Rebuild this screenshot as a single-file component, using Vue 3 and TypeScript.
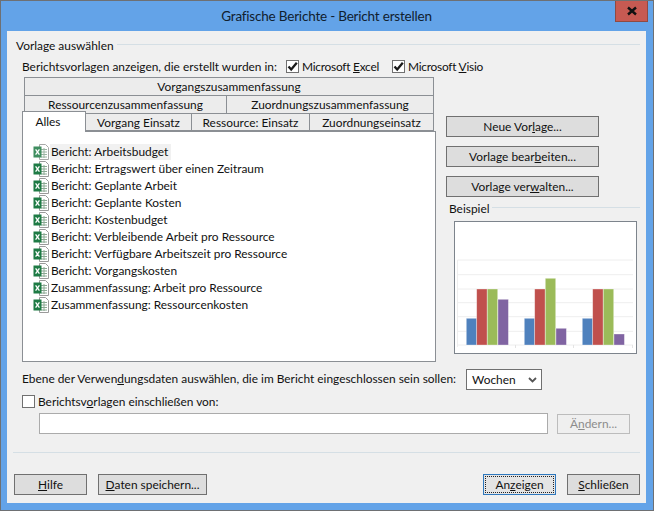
<script setup lang="ts">
const reports = [
  'Bericht: Arbeitsbudget',
  'Bericht: Ertragswert über einen Zeitraum',
  'Bericht: Geplante Arbeit',
  'Bericht: Geplante Kosten',
  'Bericht: Kostenbudget',
  'Bericht: Verbleibende Arbeit pro Ressource',
  'Bericht: Verfügbare Arbeitszeit pro Ressource',
  'Bericht: Vorgangskosten',
  'Zusammenfassung: Arbeit pro Ressource',
  'Zusammenfassung: Ressourcenkosten',
]

const grid = [38, 52.7, 67, 80.7, 94.7, 109.3, 123]

// bars in chart coordinates: x, top
const bars = [
  { x: 11.3, y: 96.3, c: '#4f81bd' },
  { x: 21.7, y: 67, c: '#c0504d' },
  { x: 32.3, y: 67, c: '#9bbb59' },
  { x: 43, y: 77.3, c: '#8064a2' },
  { x: 69.3, y: 96.3, c: '#4f81bd' },
  { x: 79.7, y: 67, c: '#c0504d' },
  { x: 90.3, y: 56.3, c: '#9bbb59' },
  { x: 101, y: 106.3, c: '#8064a2' },
  { x: 127.3, y: 96.3, c: '#4f81bd' },
  { x: 137.7, y: 67, c: '#c0504d' },
  { x: 148.3, y: 67, c: '#9bbb59' },
  { x: 159, y: 112, c: '#8064a2' },
]
</script>

<template>
  <div class="window">
    <div class="titlebar">
      <span class="title">Grafische Berichte - Bericht erstellen</span>
      <div class="close">
        <svg width="12" height="10" viewBox="0 0 12 10">
          <path d="M2 1.5 L10 8.5 M10 1.5 L2 8.5" stroke="#111" stroke-width="2.4" fill="none" />
        </svg>
      </div>
    </div>

    <div class="content">
      <div class="legend"><span>Vorlage auswählen</span><i></i></div>

      <div class="filter">
        <span class="filter-label">Berichtsvorlagen anzeigen, die erstellt wurden in:</span>
        <span class="check checked">
          <svg width="11" height="11" viewBox="0 0 11 11"><path d="M1.5 5.5 L4.2 8.5 L9.8 1.8" stroke="#1a1a1a" stroke-width="2.3" fill="none" /></svg>
        </span>
        <span class="check-label">Microsoft <u>E</u>xcel</span>
        <span class="check checked second">
          <svg width="11" height="11" viewBox="0 0 11 11"><path d="M1.5 5.5 L4.2 8.5 L9.8 1.8" stroke="#1a1a1a" stroke-width="2.3" fill="none" /></svg>
        </span>
        <span class="check-label">Microsoft <u>V</u>isio</span>
      </div>

      <div class="main">
        <div class="left">
          <div class="tabs">
            <div class="tab-row">
              <div class="tab grow">Vorgangszusammenfassung</div>
            </div>
            <div class="tab-row">
              <div class="tab w203">Ressourcenzusammenfassung</div>
              <div class="tab grow">Zuordnungszusammenfassung</div>
            </div>
            <div class="tab-row last">
              <div class="tab active">Alles</div>
              <div class="tab w106">Vorgang Einsatz</div>
              <div class="tab w118">Ressource: Einsatz</div>
              <div class="tab grow">Zuordnungseinsatz</div>
            </div>
          </div>
          <div class="panel">
            <div v-for="(r, i) in reports" :key="r" class="report" :class="{ selected: i === 0 }">
              <svg class="xl" width="16" height="16" viewBox="0 0 16 16">
                <path d="M6.5 0.5 H12.5 L15.5 3.5 V15.5 H6.5 Z" fill="#fff" stroke="#9a9a9a" />
                <path d="M8 5.5 H14 M8 8 H14 M8 10.5 H14 M8 13 H14 M11 4 V14" stroke="#8aa892" stroke-width="1" fill="none" />
                <rect x="0.5" y="2.5" width="8" height="11" fill="#1e7b45" />
                <path d="M2.6 5.3 L6.4 10.7 M6.4 5.3 L2.6 10.7" stroke="#fff" stroke-width="1.3" fill="none" />
              </svg>
              <span class="report-text">{{ r }}</span>
            </div>
          </div>
        </div>

        <div class="right">
          <div class="btn side">Neue Vor<u>l</u>age...</div>
          <div class="btn side">Vorlage bear<u>b</u>eiten...</div>
          <div class="btn side">Vorlage ver<u>w</u>alten...</div>
          <div class="legend sample"><span>Beispiel</span><i></i></div>
          <div class="chart">
            <svg width="181" height="131" viewBox="0 0 181 131">
              <line v-for="y in grid" :key="y" x1="2.5" :y1="y" x2="178" :y2="y" stroke="#eeeeee" stroke-width="1" />
              <line x1="2.5" y1="38" x2="2.5" y2="125" stroke="#eeeeee" />
              <path d="M60.5 123 V126 M118.5 123 V126 M177.5 123 V126" stroke="#e4e4e4" />
              <rect
                v-for="(b, i) in bars"
                :key="i"
                :x="b.x"
                :y="b.y"
                width="10.4"
                :height="123 - b.y"
                :fill="b.c"
                stroke="#fff"
                stroke-opacity="0.45"
                stroke-width="0.7"
              />
            </svg>
          </div>
        </div>
      </div>

      <div class="level">
        <span class="level-label">Ebene der Verwen<u>d</u>ungsdaten auswählen, die im Bericht eingeschlossen sein sollen:</span>
        <div class="select">
          <span>Wochen</span>
          <svg width="9" height="6" viewBox="0 0 9 6"><path d="M1 1 L4.5 4.5 L8 1" stroke="#555" stroke-width="1.8" fill="none" /></svg>
        </div>
      </div>

      <div class="include">
        <span class="check"></span>
        <span class="check-label">Berichtsv<u>o</u>rlagen einschließen von:</span>
      </div>

      <div class="path-row">
        <input class="path" type="text" />
        <div class="btn disabled">Ä<u>n</u>dern...</div>
      </div>

      <div class="sep"></div>

      <div class="footer">
        <div class="btn w73"><u>H</u>ilfe</div>
        <div class="btn w109"><u>D</u>aten speichern...</div>
        <div class="spacer"></div>
        <div class="btn w73 default"><span class="focus">An<u>z</u>eigen</span></div>
        <div class="btn w73"><u>S</u>chließen</div>
      </div>
    </div>
  </div>
</template>

<style>
html,
body {
  margin: 0;
  background: #63a3e8;
  overflow: hidden;
}
</style>

<style scoped>
.window {
  position: relative;
  box-sizing: border-box;
  width: 654px;
  height: 511px;
  display: flex;
  flex-direction: column;
  background: #63a3e8;
  border: 1px solid #6e7073;
  font-family: 'Lato', 'Noto Sans', sans-serif;
  font-size: 11.9px;
  color: #111;
  white-space: nowrap;
}
.titlebar {
  height: 30px;
  flex: none;
  display: flex;
  align-items: center;
  justify-content: center;
}
.title {
  font-size: 13.5px;
  letter-spacing: -0.2px;
  color: #10202e;
  margin-top: -1px;
  margin-right: 1px;
}
.close {
  position: absolute;
  top: 0;
  right: 5px;
  width: 33px;
  height: 21px;
  box-sizing: border-box;
  background: #c75a52;
  border: 1px solid #8f4a42;
  border-top: none;
  display: flex;
  align-items: center;
  justify-content: center;
}
.content {
  flex: none;
  width: 639px;
  height: 472px;
  margin-left: 6px;
  box-sizing: border-box;
  background: #f0f0f0;
  padding: 7px 6px 0 9px;
  display: flex;
  flex-direction: column;
}
.legend {
  display: flex;
  align-items: center;
  height: 14px;
  gap: 3px;
}
.legend i {
  flex: 1;
  height: 1px;
  background: #d5dfe5;
  margin-top: -1px;
}
.filter {
  display: flex;
  align-items: center;
  height: 14px;
  margin: 7px 0 4px 6px;
}
.filter-label {
  width: 264px;
}
.filter .check-label {
  letter-spacing: -0.25px;
}
.check {
  box-sizing: border-box;
  flex: none;
  width: 13px;
  height: 13px;
  background: #fff;
  border: 1px solid #707070;
  display: flex;
  align-items: center;
  justify-content: center;
}
.check.second {
  margin-left: 13px;
}
.check-label {
  margin-left: 3px;
}
.main {
  display: flex;
  height: 285px;
  margin-left: 6px;
}
.left {
  width: 414px;
  flex: none;
  display: flex;
  flex-direction: column;
}
.tabs {
  margin-left: 2px;
  width: 410px;
  flex: none;
}
.tab-row {
  display: flex;
  height: 18px;
}
.tab {
  box-sizing: border-box;
  display: flex;
  align-items: center;
  justify-content: center;
  background: #ececec;
  border: 1px solid #8b8f94;
  border-left: none;
  border-bottom: none;
  padding-bottom: 1px;
}
.tab-row .tab:first-child {
  border-left: 1px solid #8b8f94;
}
.tab.grow {
  flex: 1;
}
.w203 {
  width: 203px;
}
.w106 {
  width: 106px;
}
.w118 {
  width: 118px;
}
.tab.active {
  position: relative;
  z-index: 1;
  width: 64px;
  height: 21px;
  margin: -2px 0 0 -2px;
  background: #fff;
  padding: 0 12px 2px 0;
}
.tab-row.last .tab:not(.active) {
  border-bottom: 1px solid #8b8f94;
  padding-bottom: 0;
}
.panel {
  flex: 1;
  box-sizing: border-box;
  background: #fff;
  border: 1px solid #8b8f94;
  padding: 11px 0 0 10px;
}
.report {
  display: flex;
  align-items: center;
  height: 17px;
}
.xl {
  flex: none;
  margin-right: 1px;
}
.report-text {
  padding: 0 0 0 1px;
  line-height: 16px;
}
.report.selected .report-text {
  background: #f1f1f1;
  padding-right: 3px;
}
.report.selected .xl {
  opacity: 0.85;
}
.right {
  flex: 1;
  margin-left: 10px;
  padding-top: 39px;
  display: flex;
  flex-direction: column;
}
.btn {
  box-sizing: border-box;
  height: 21px;
  display: flex;
  align-items: center;
  justify-content: center;
  background: #dddddd;
  border: 1px solid #707070;
  flex: none;
}
.btn.side {
  width: 153px;
  margin-bottom: 9px;
}
.legend.sample {
  margin: -5px 0 6px 3px;
  height: 14px;
}
.chart {
  box-sizing: border-box;
  width: 183px;
  height: 133px;
  margin-left: 8px;
  background: #fff;
  border: 1px solid #7d848c;
}
.chart svg {
  display: block;
}
.level {
  display: flex;
  align-items: center;
  height: 21px;
  margin: 7px 0 0 6px;
}
.level-label {
  width: 444px;
  margin-top: -3px;
}
.select {
  box-sizing: border-box;
  width: 76px;
  height: 21px;
  background: #fff;
  border: 1px solid #707070;
  display: flex;
  align-items: center;
  justify-content: space-between;
  padding: 0 4px 0 5px;
}
.include {
  display: flex;
  align-items: center;
  height: 14px;
  margin: 4px 0 0 6px;
}
.path-row {
  display: flex;
  align-items: center;
  margin: 5px 0 0 23px;
}
.path {
  box-sizing: border-box;
  width: 509px;
  height: 21px;
  margin: 0;
  background: #fff;
  border: 1px solid #ababab;
  outline: none;
}
.btn.disabled {
  width: 73px;
  height: 20px;
  margin-left: 9px;
  color: #8c8c8c;
  background: #efefef;
  border-color: #bcbcbc;
}
.sep {
  height: 1px;
  background: #d5dfe5;
  margin: 18px 0 0 -3px;
}
.footer {
  display: flex;
  margin: 21px 0 0 -2px;
  gap: 11px;
}
.spacer {
  flex: 1;
}
.w73 {
  width: 73px;
}
.w109 {
  width: 109px;
}
.btn.default {
  background: #e4e4e4;
  border-color: #2f78bd;
  padding: 1px;
}
.focus {
  flex: 1;
  align-self: stretch;
  display: flex;
  align-items: center;
  justify-content: center;
  border: 1px dotted #222;
}
</style>
